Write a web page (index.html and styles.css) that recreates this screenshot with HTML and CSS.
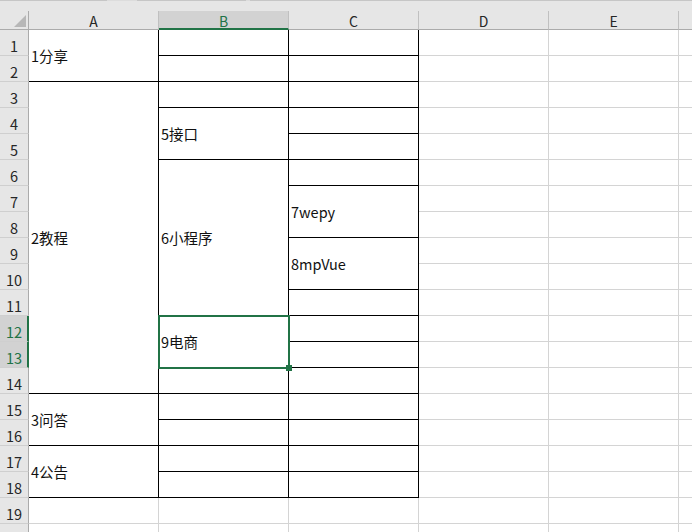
FILE: index.html
```html
<!DOCTYPE html>
<html lang="zh">
<head>
<meta charset="utf-8">
<title>Sheet</title>
<link rel="stylesheet" href="styles.css">
</head>
<body>
<div class="topbar">
  <span class="seg seg1"></span><span class="gap gap1"></span><span class="seg seg2"></span><span class="gap gap2"></span><span class="seg seg3"></span>
</div>
<div class="sheet">
  <div class="corner"><svg width="12" height="12" viewBox="0 0 12 12"><polygon points="0,12 12,12 12,0" fill="#b7b7b7"/></svg></div>
  <div class="ch">A</div><div class="ch chsel">B</div><div class="ch">C</div><div class="ch">D</div><div class="ch">E</div><div class="ch chlast"></div>

  <div class="rh">1</div><div class="c b r2">1分享</div><div class="c b"></div><div class="c b"></div><div class="c"></div><div class="c"></div><div class="c f"></div>
  <div class="rh">2</div><div class="c b"></div><div class="c b"></div><div class="c"></div><div class="c"></div><div class="c f"></div>
  <div class="rh">3</div><div class="c b r12">2教程</div><div class="c b"></div><div class="c b"></div><div class="c"></div><div class="c"></div><div class="c f"></div>
  <div class="rh">4</div><div class="c b r2">5接口</div><div class="c b"></div><div class="c"></div><div class="c"></div><div class="c f"></div>
  <div class="rh">5</div><div class="c b"></div><div class="c"></div><div class="c"></div><div class="c f"></div>
  <div class="rh">6</div><div class="c b r6">6小程序</div><div class="c b"></div><div class="c"></div><div class="c"></div><div class="c f"></div>
  <div class="rh">7</div><div class="c b r2">7wepy</div><div class="c"></div><div class="c"></div><div class="c f"></div>
  <div class="rh">8</div><div class="c"></div><div class="c"></div><div class="c f"></div>
  <div class="rh">9</div><div class="c b r2">8mpVue</div><div class="c"></div><div class="c"></div><div class="c f"></div>
  <div class="rh">10</div><div class="c"></div><div class="c"></div><div class="c f"></div>
  <div class="rh">11</div><div class="c b"></div><div class="c"></div><div class="c"></div><div class="c f"></div>
  <div class="rh rhsel">12</div><div class="c b r2 active">9电商<span class="selbox"></span><span class="handle"></span></div><div class="c b"></div><div class="c"></div><div class="c"></div><div class="c f"></div>
  <div class="rh rhsel">13</div><div class="c b"></div><div class="c"></div><div class="c"></div><div class="c f"></div>
  <div class="rh">14</div><div class="c b"></div><div class="c b"></div><div class="c"></div><div class="c"></div><div class="c f"></div>
  <div class="rh">15</div><div class="c b r2">3问答</div><div class="c b"></div><div class="c b"></div><div class="c"></div><div class="c"></div><div class="c f"></div>
  <div class="rh">16</div><div class="c b"></div><div class="c b"></div><div class="c"></div><div class="c"></div><div class="c f"></div>
  <div class="rh">17</div><div class="c b r2">4公告</div><div class="c b"></div><div class="c b"></div><div class="c"></div><div class="c"></div><div class="c f"></div>
  <div class="rh">18</div><div class="c b"></div><div class="c b"></div><div class="c"></div><div class="c"></div><div class="c f"></div>
  <div class="rh">19</div><div class="c"></div><div class="c"></div><div class="c"></div><div class="c"></div><div class="c"></div><div class="c f"></div>
  <div class="rh"></div><div class="c"></div><div class="c"></div><div class="c"></div><div class="c"></div><div class="c"></div><div class="c f"></div>
</div>
</body>
</html>
```

FILE: styles.css
```css
html, body {
  margin: 0;
  padding: 0;
  background: #ffffff;
  overflow: hidden;
}
body {
  width: 692px;
  height: 532px;
  font-family: "Noto Sans CJK SC", "Noto Sans", sans-serif;
}
.topbar {
  display: flex;
  height: 11px;
  background: #e6e6e6;
}
.seg {
  height: 1px;
  background: #c6c6c6;
}
.gap {
  height: 1px;
  background: #dcdcdc;
}
.seg1 { width: 107px; }
.gap1 { width: 30px; }
.seg2 { width: 109px; }
.gap2 { width: 4px; }
.seg3 { flex: 1; }

.sheet {
  display: grid;
  grid-template-columns: 29px repeat(5, 130px) 1fr;
  grid-template-rows: 19px repeat(20, 26px);
}
.corner {
  background: #e6e6e6;
  border-right: 1px solid #ababab;
  border-bottom: 1px solid #ababab;
  box-sizing: border-box;
  display: flex;
  align-items: flex-end;
  justify-content: flex-end;
  padding: 0 2px 2px 0;
}
.corner svg { display: block; }
.ch {
  box-sizing: border-box;
  background: #e6e6e6;
  border-right: 1px solid #c0c0c0;
  border-bottom: 1px solid #ababab;
  display: flex;
  align-items: center;
  justify-content: center;
  font-size: 14px;
  line-height: 18px;
  color: #262626;
  padding-top: 1px;
}
.chsel {
  background: #d2d2d2;
  color: #217346;
  border-bottom: 2px solid #217346;
  padding-top: 2px;
}
.chlast { border-right: none; }
.rh {
  box-sizing: border-box;
  background: #e6e6e6;
  border-right: 1px solid #ababab;
  border-bottom: 1px solid #cfcfcf;
  display: flex;
  align-items: flex-end;
  justify-content: center;
  font-size: 14.5px;
  line-height: 18px;
  color: #262626;
  padding-bottom: 0;
}
.rhsel {
  background: #d2d2d2;
  color: #217346;
  border-right: 2px solid #217346;
  padding-left: 1px;
}
.c {
  box-sizing: border-box;
  border-right: 1px solid #d4d4d4;
  border-bottom: 1px solid #d4d4d4;
  display: flex;
  align-items: center;
  padding: 0 0 0 2px;
  font-size: 14.5px;
  line-height: 18px;
  color: #111111;
  white-space: nowrap;
}
.c.b {
  border-right-color: #000000;
  border-bottom-color: #000000;
}
.c.f { border-right: none; }
.r2 { grid-row: span 2; }
.r6 { grid-row: span 6; }
.r12 { grid-row: span 12; }
.active { position: relative; }
.selbox {
  position: absolute;
  left: -1px;
  top: -1px;
  width: 132px;
  height: 54px;
  box-sizing: border-box;
  border: 2px solid #217346;
}
.handle {
  position: absolute;
  left: 127px;
  top: 49px;
  width: 6px;
  height: 6px;
  background: #217346;
}
```
